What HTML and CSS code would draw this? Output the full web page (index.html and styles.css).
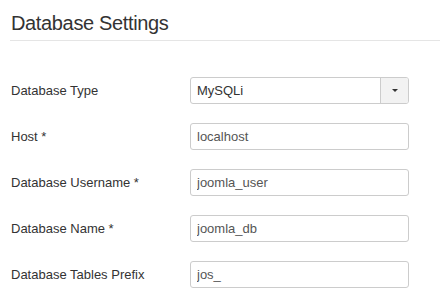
FILE: index.html
```html
<!DOCTYPE html>
<html>
<head>
    <title>Database Settings</title>
    <link rel="stylesheet" href="styles.css">
</head>
<body>
    <div class="settings">
        <h2 class="page-title">Database Settings</h2>

        <form class="settings-form">
            <label for="dbType">Database Type</label>
            <div class="select-box">
                <span class="select-value">MySQLi</span>
                <span class="select-btn"><span class="caret"></span></span>
            </div>

            <label for="dbHost">Host *</label>
            <input type="text" id="dbHost" value="localhost">

            <label for="dbUser">Database Username *</label>
            <input type="text" id="dbUser" value="joomla_user">

            <label for="dbName">Database Name *</label>
            <input type="text" id="dbName" value="joomla_db">

            <label for="dbPrefix">Database Tables Prefix</label>
            <input type="text" id="dbPrefix" value="jos_">
        </form>
    </div>
</body>
</html>
```

FILE: styles.css
```css
body {
    margin: 0;
    background: #fff;
    font-family: "Liberation Sans", Arial, sans-serif;
    color: #333;
}

.settings {
    padding-left: 10px;
}

.page-title {
    margin: 0;
    padding: 12px 0 6px 1px;
    font-size: 20px;
    font-weight: normal;
    line-height: 22px;
    letter-spacing: -0.35px;
    border-bottom: 1px solid #e5e5e5;
}

.settings-form {
    display: grid;
    grid-template-columns: 180px 219px;
    row-gap: 19px;
    margin-top: 36px;
    align-items: center;
}

.settings-form label {
    padding-left: 1px;
    font-size: 13px;
}

.settings-form input,
.select-box {
    box-sizing: border-box;
    height: 27px;
    width: 219px;
    margin: 0;
    padding: 0 6px;
    border: 1px solid #ccc;
    border-radius: 3px;
    font-family: inherit;
    font-size: 13px;
    color: #555;
    background: #fff;
}

.select-box {
    display: flex;
    align-items: center;
    padding: 0;
    overflow: hidden;
}

.select-value {
    flex: 1;
    padding-left: 6px;
    color: #333;
}

.select-btn {
    display: flex;
    align-items: center;
    justify-content: center;
    width: 27px;
    height: 100%;
    border-left: 1px solid #ccc;
    background: #f2f2f2;
}

.caret {
    width: 0;
    height: 0;
    border-left: 3px solid transparent;
    border-right: 3px solid transparent;
    border-top: 3px solid #333;
}
```
